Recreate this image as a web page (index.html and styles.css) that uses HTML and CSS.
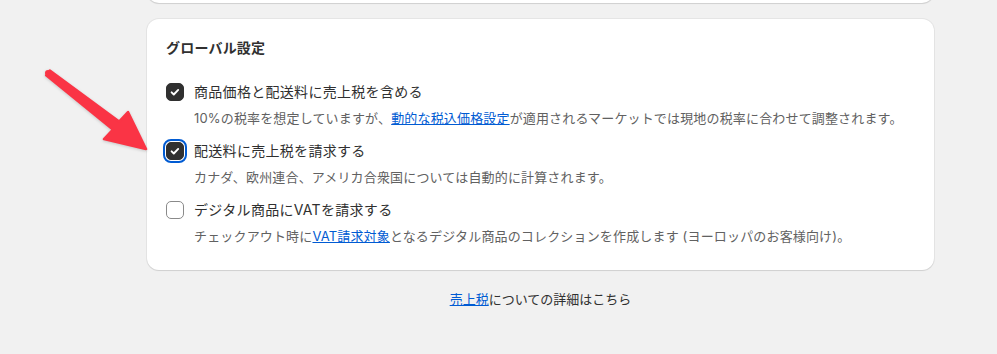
FILE: index.html
```html
<!DOCTYPE html>
<html lang="ja">
<head>
<meta charset="utf-8">
<title>グローバル設定</title>
<link rel="stylesheet" href="styles.css">
</head>
<body>
<div class="page">
  <div class="card card-prev"></div>
  <section class="card">
    <h2 class="card-title">グローバル設定</h2>
    <ul class="options">
      <li class="option">
        <div class="option-row">
          <span class="checkbox checked"><svg viewBox="0 0 18 18" width="18" height="18"><path d="M5.6 9.3l2.2 2.2 4.4-4.6" fill="none" stroke="#fff" stroke-width="1.9" stroke-linecap="round" stroke-linejoin="round"/></svg></span>
          <span class="label">商品価格と配送料に売上税を含める</span>
        </div>
        <p class="desc">10%の税率を想定していますが、<a href="#" class="link">動的な税込価格設定</a>が適用されるマーケットでは現地の税率に合わせて調整されます。</p>
      </li>
      <li class="option">
        <div class="option-row">
          <span class="checkbox checked focused"><svg viewBox="0 0 18 18" width="18" height="18"><path d="M5.6 9.3l2.2 2.2 4.4-4.6" fill="none" stroke="#fff" stroke-width="1.9" stroke-linecap="round" stroke-linejoin="round"/></svg></span>
          <span class="label">配送料に売上税を請求する</span>
        </div>
        <p class="desc">カナダ、欧州連合、アメリカ合衆国については自動的に計算されます。</p>
      </li>
      <li class="option">
        <div class="option-row">
          <span class="checkbox"></span>
          <span class="label">デジタル商品にVATを請求する</span>
        </div>
        <p class="desc">チェックアウト時に<a href="#" class="link">VAT請求対象</a>となるデジタル商品のコレクションを作成します (ヨーロッパのお客様向け)。</p>
      </li>
    </ul>
  </section>
  <p class="footer"><a href="#" class="link">売上税</a>についての詳細はこちら</p>
</div>
<svg class="arrow" width="160" height="160" viewBox="0 0 160 160">
  <polygon points="49.8,70.6 119.1,121.6 128,112 146,149 104,139 112.9,129.5 46.2,75.4" fill="#fa3445" stroke="#fa3445" stroke-width="2.5" stroke-linejoin="round"/>
  <circle cx="48" cy="73" r="3" fill="#fa3445"/>
</svg>
</body>
</html>
```
FILE: styles.css
```css
* { box-sizing: border-box; }
html, body { margin: 0; padding: 0; }
body {
  background: #f1f1f1;
  font-family: Inter, "Noto Sans CJK JP", sans-serif;
  color: #303030;
  width: 997px;
  height: 354px;
  overflow: hidden;
  position: relative;
}
.page {
  padding: 0 63px 0 147px;
}
.card {
  background: #fff;
  border-radius: 12px;
  box-shadow: 0 1px 1px rgba(26,26,26,0.10), 0 0 0 1px rgba(26,26,26,0.05);
}
.card-prev {
  height: 60px;
  margin-top: -57px;
  margin-bottom: 16px;
}
section.card {
  padding: 19px 19px 24px;
}
.card-title {
  margin: 0;
  font-size: 14px;
  line-height: 20px;
  font-weight: 700;
  color: #303030;
  letter-spacing: 0.2px;
}
.options {
  list-style: none;
  margin: 24px 0 0;
  padding: 0;
  display: flex;
  flex-direction: column;
  gap: 13px;
}
.option-row {
  display: flex;
  align-items: center;
  gap: 10px;
  height: 20px;
}
.checkbox {
  width: 18px;
  height: 18px;
  flex: 0 0 18px;
  border-radius: 5px;
  border: 1px solid #8a8a8a;
  background: #fff;
  display: flex;
  align-items: center;
  justify-content: center;
}
.checkbox.checked {
  background: #303030;
  border-color: #303030;
}
.checkbox svg { display: block; flex: none; margin: -1px; }
.checkbox.focused {
  outline: 2px solid #005bd3;
  outline-offset: 1px;
}
.label {
  font-size: 14px;
  line-height: 20px;
  color: #303030;
  letter-spacing: 0.3px;
}
.desc {
  margin: 6px 0 0 28px;
  font-size: 13px;
  line-height: 20px;
  color: #616161;
  white-space: nowrap;
  letter-spacing: 0.16px;
}
.link {
  color: #005bd3;
  text-decoration: underline;
}
.footer {
  margin: 19px 0 0;
  text-align: center;
  font-size: 13px;
  line-height: 20px;
  color: #303030;
}
.arrow {
  position: absolute;
  left: 0;
  top: 0;
  filter: drop-shadow(0 1px 1.5px rgba(0,0,0,0.18));
}
```
